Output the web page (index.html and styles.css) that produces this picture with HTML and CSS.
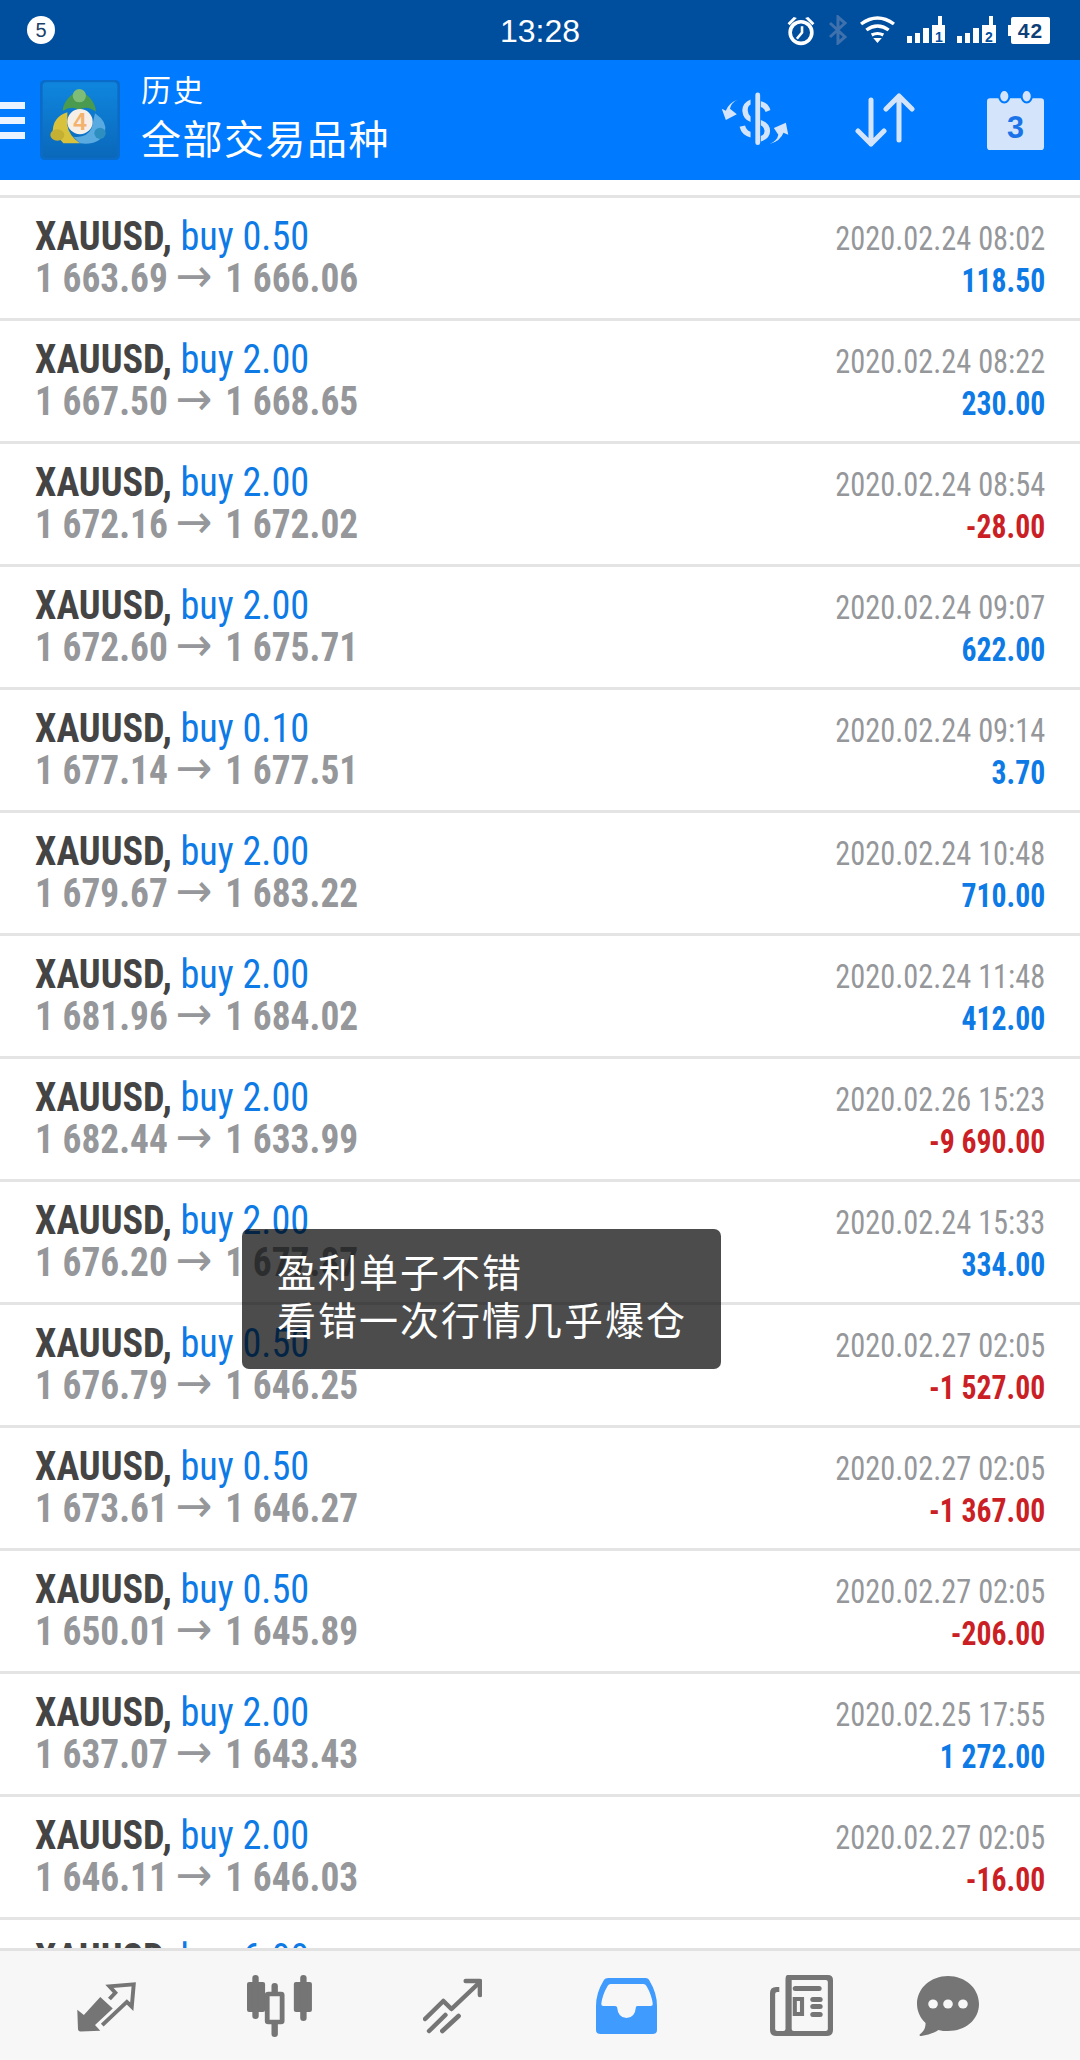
FILE: index.html
```html
<!DOCTYPE html>
<html lang="zh">
<head>
<meta charset="UTF-8">
<title>历史</title>
<link rel="stylesheet" href="styles.css">
</head>
<body>
<div class="screen">

  <div class="status">
    <div class="status-left"><span class="badge">5</span></div>
    <div class="clock">13:28</div>
    <div class="status-right">
      <svg width="30" height="31" viewBox="0 0 28 30"><circle cx="14" cy="17" r="10.5" fill="none" stroke="#fff" stroke-width="3.5"/><path d="M15 11v6l-5 6" fill="none" stroke="#fff" stroke-width="2.5"/><path d="M1 8l6-6 3 1-7 7zM27 8l-6-6-3 1 7 7z" fill="#fff"/></svg>
      <svg width="20" height="30" viewBox="0 0 20 30"><path d="M2 8l15 14-7 6V2l7 6L2 22" fill="none" stroke="#3f71ad" stroke-width="3"/></svg>
      <svg width="35" height="28" viewBox="0 0 33 28" preserveAspectRatio="none"><path d="M1 8q15.500-12 31 0M6 14q10.500-8 21 0M11 19q5.500-3 11 0" fill="none" stroke="#fff" stroke-width="3.2"/><path d="M12.500 22h8l-4 5z" fill="#fff"/></svg>
      <svg width="38" height="28" viewBox="0 0 38 28"><path d="M0 20h5v7H0zM8 17h5v10H8zM16 12h6v15h-6zM25 9h13v18H25zM31 0h4v9h-4z" fill="#fff"/><text x="28" y="26" class="sim">1</text></svg>
      <svg width="39" height="28" viewBox="0 0 39 28"><path d="M0 20h5v7H0zM8 17h5v10H8zM16 12h6v15h-6zM25 9h14v18H25zM32 0h4v9h-4z" fill="#fff"/><text x="28" y="26" class="sim">2</text></svg>
      <div class="battery">42</div>
    </div>
  </div>

  <div class="appbar">
    <div class="burger"><i></i><i></i><i></i></div>
    <svg class="logo" width="80" height="80" viewBox="30 15 240 240">
      <defs><linearGradient id="logobg" x1="0" y1="0" x2="0" y2="1"><stop offset="0" stop-color="#0f86de"/><stop offset="1" stop-color="#0a68ba"/></linearGradient></defs>
      <rect x="30" y="15" width="240" height="240" rx="14" fill="#0a6bc8"/>
      <rect x="38" y="22" width="224" height="226" rx="12" fill="url(#logobg)"/>
      <path d="M98 108Q100 70 148 45 195 70 198 110 170 90 148 105 125 90 98 108z" fill="#4a9a50"/>
      <circle cx="148" cy="62" r="20" fill="#7dbd78"/>
      <path d="M112 112Q70 125 68 168L100 205H150Q115 180 112 150z" fill="#d8c23c"/>
      <ellipse cx="82" cy="180" rx="21" ry="17" fill="#c4b033"/>
      <path d="M195 115Q232 140 225 170 210 212 150 205L130 185Q170 190 185 160z" fill="#58aae0"/>
      <circle cx="210" cy="175" r="17" fill="#2d8fc0"/>
      <circle cx="150" cy="140" r="38" fill="#f5efe8"/>
      <text x="150" y="165" class="logo-num">4</text>
    </svg>
    <div class="titles">
      <div class="title-small">历史</div>
      <div class="title-big">全部交易品种</div>
    </div>
    <div class="actions">
      <svg width="94" height="72" viewBox="0 0 270 210"><g fill="#d4e5fb"><rect x="136" y="25" width="14" height="153" rx="7"/><path d="M152 50q22 4 28 26l-14 6q-3-12-14-15zM122 45v15q-9 5-8 18 1 12 8 17v16q-22-8-24-32-1-24 24-34zM152 105q27 9 27 32 0 22-27 31v-16q11-5 11-15 0-10-11-17zM90 125l16-4q4 15 16 18v17q-26-6-32-31z"/><path d="M85 45Q65 55 62 72L82 88 50 105 38 72 50 78Q58 55 85 45zM178 175Q200 165 203 148L190 128 225 113 232 148 218 142Q210 165 178 175z"/></g></svg>
      <svg width="60" height="54" viewBox="0 0 60 54"><g fill="none" stroke="#d4e5fb" stroke-width="5" stroke-linecap="round" stroke-linejoin="round"><path d="M16 7v44M3 38l13 13 13-13"/><path d="M44 3v44M31 16L44 3l13 13"/></g></svg>
      <svg class="act-cal" width="57" height="60" viewBox="0 0 56 58" preserveAspectRatio="none"><path d="M3 8h50q3 0 3 3v44q0 3-3 3H3q-3 0-3-3V11q0-3 3-3z" fill="#d4e5fb"/><ellipse cx="17" cy="6" rx="5" ry="6" fill="#d4e5fb" stroke="#007aff" stroke-width="2"/><ellipse cx="39" cy="6" rx="5" ry="6" fill="#d4e5fb" stroke="#007aff" stroke-width="2"/><text x="28" y="46" class="cal-num">3</text></svg>
    </div>
  </div>

  <div class="list">
    <div class="row">
      <div class="left"><div class="head"><b>XAUUSD,</b> <span class="buy">buy 0.50</span></div><div class="prices">1 663.69<span class="arr">→</span>1 666.06</div></div>
      <div class="right"><div class="date">2020.02.24 08:02</div><div class="pl">118.50</div></div>
    </div>
    <div class="row">
      <div class="left"><div class="head"><b>XAUUSD,</b> <span class="buy">buy 2.00</span></div><div class="prices">1 667.50<span class="arr">→</span>1 668.65</div></div>
      <div class="right"><div class="date">2020.02.24 08:22</div><div class="pl">230.00</div></div>
    </div>
    <div class="row">
      <div class="left"><div class="head"><b>XAUUSD,</b> <span class="buy">buy 2.00</span></div><div class="prices">1 672.16<span class="arr">→</span>1 672.02</div></div>
      <div class="right"><div class="date">2020.02.24 08:54</div><div class="pl loss">-28.00</div></div>
    </div>
    <div class="row">
      <div class="left"><div class="head"><b>XAUUSD,</b> <span class="buy">buy 2.00</span></div><div class="prices">1 672.60<span class="arr">→</span>1 675.71</div></div>
      <div class="right"><div class="date">2020.02.24 09:07</div><div class="pl">622.00</div></div>
    </div>
    <div class="row">
      <div class="left"><div class="head"><b>XAUUSD,</b> <span class="buy">buy 0.10</span></div><div class="prices">1 677.14<span class="arr">→</span>1 677.51</div></div>
      <div class="right"><div class="date">2020.02.24 09:14</div><div class="pl">3.70</div></div>
    </div>
    <div class="row">
      <div class="left"><div class="head"><b>XAUUSD,</b> <span class="buy">buy 2.00</span></div><div class="prices">1 679.67<span class="arr">→</span>1 683.22</div></div>
      <div class="right"><div class="date">2020.02.24 10:48</div><div class="pl">710.00</div></div>
    </div>
    <div class="row">
      <div class="left"><div class="head"><b>XAUUSD,</b> <span class="buy">buy 2.00</span></div><div class="prices">1 681.96<span class="arr">→</span>1 684.02</div></div>
      <div class="right"><div class="date">2020.02.24 11:48</div><div class="pl">412.00</div></div>
    </div>
    <div class="row">
      <div class="left"><div class="head"><b>XAUUSD,</b> <span class="buy">buy 2.00</span></div><div class="prices">1 682.44<span class="arr">→</span>1 633.99</div></div>
      <div class="right"><div class="date">2020.02.26 15:23</div><div class="pl loss">-9 690.00</div></div>
    </div>
    <div class="row">
      <div class="left"><div class="head"><b>XAUUSD,</b> <span class="buy">buy 2.00</span></div><div class="prices">1 676.20<span class="arr">→</span>1 677.87</div></div>
      <div class="right"><div class="date">2020.02.24 15:33</div><div class="pl">334.00</div></div>
    </div>
    <div class="row">
      <div class="left"><div class="head"><b>XAUUSD,</b> <span class="buy">buy 0.50</span></div><div class="prices">1 676.79<span class="arr">→</span>1 646.25</div></div>
      <div class="right"><div class="date">2020.02.27 02:05</div><div class="pl loss">-1 527.00</div></div>
    </div>
    <div class="row">
      <div class="left"><div class="head"><b>XAUUSD,</b> <span class="buy">buy 0.50</span></div><div class="prices">1 673.61<span class="arr">→</span>1 646.27</div></div>
      <div class="right"><div class="date">2020.02.27 02:05</div><div class="pl loss">-1 367.00</div></div>
    </div>
    <div class="row">
      <div class="left"><div class="head"><b>XAUUSD,</b> <span class="buy">buy 0.50</span></div><div class="prices">1 650.01<span class="arr">→</span>1 645.89</div></div>
      <div class="right"><div class="date">2020.02.27 02:05</div><div class="pl loss">-206.00</div></div>
    </div>
    <div class="row">
      <div class="left"><div class="head"><b>XAUUSD,</b> <span class="buy">buy 2.00</span></div><div class="prices">1 637.07<span class="arr">→</span>1 643.43</div></div>
      <div class="right"><div class="date">2020.02.25 17:55</div><div class="pl">1 272.00</div></div>
    </div>
    <div class="row">
      <div class="left"><div class="head"><b>XAUUSD,</b> <span class="buy">buy 2.00</span></div><div class="prices">1 646.11<span class="arr">→</span>1 646.03</div></div>
      <div class="right"><div class="date">2020.02.27 02:05</div><div class="pl loss">-16.00</div></div>
    </div>
    <div class="row">
      <div class="left"><div class="head"><b>XAUUSD,</b> <span class="buy">buy 6.00</span></div></div>
    </div>
  </div>

  <div class="toast">盈利单子不错<br>看错一次行情几乎爆仓</div>

  <div class="nav">
    <svg width="63" height="54" viewBox="45 25 192 170" preserveAspectRatio="none"><path d="M52 122L72 138 122 82 160 118 106 170 122 188 62 190Q54 190 54 182z" fill="#757575"/><path d="M150 88L168 68 150 48 224 42 218 112 203 97 128 170" fill="none" stroke="#757575" stroke-width="12"/></svg>
    <svg class="nav-candle" width="66" height="62" viewBox="0 0 62 62" preserveAspectRatio="none"><g fill="#757575"><rect x="0" y="7" width="17" height="30" rx="2"/><rect x="5" y="0" width="6" height="44" rx="3"/><rect x="44" y="7" width="17" height="30" rx="2"/><rect x="50" y="0" width="6" height="46" rx="3"/><rect x="23" y="8" width="6" height="54" rx="3"/></g><rect x="19" y="19" width="14" height="28" rx="1" fill="#f7f7f7" stroke="#757575" stroke-width="4.500"/></svg>
    <svg class="nav-chart" width="59" height="56" viewBox="0 0 58 56" preserveAspectRatio="none"><g fill="none" stroke="#757575" stroke-width="4.500" stroke-linecap="round" stroke-linejoin="round"><path d="M2 41l18-18 8 8 28-27"/><path d="M42 3h14v14"/><path d="M6 53l16-16M19 53l16-15"/></g></svg>
    <svg class="nav-inbox" width="61" height="56" viewBox="0 0 58 56" preserveAspectRatio="none"><path fill-rule="evenodd" d="M12 0h35q3 0 4 3 7 12 7 25v24q0 4-4 4H4q-4 0-4-4V28Q0 15 7 3q1-3 5-3zM14 6q-2 0-3 2-5 9-6 18 0 2 2 2h11q1 0 2 1 1 11 9 11t9-11q0-1 2-1h12q2 0 2-2-1-9-6-18-1-2-3-2z" fill="#409bff"/></svg>
    <svg class="nav-news" width="63" height="61" viewBox="0 0 61 61" preserveAspectRatio="none"><g fill="#757575"><path fill-rule="evenodd" d="M17 0h39q5 0 5 5v50q0 6-6 6H6q-6 0-6-6V18q0-6 6-6h3v5H7q-2 0-2 2v35q0 2 2 2h6q2 0 2-2V5q0-5 2-5zM21 5v49q0 2 2 2h31q2 0 2-2V7q0-2-2-2z"/><rect x="22" y="11" width="28" height="5" rx="2.500"/><path fill-rule="evenodd" d="M22 22h11v19H22zM26 26v11h3V26z"/><rect x="39" y="22" width="12" height="5" rx="2.500"/><rect x="39" y="29" width="12" height="5" rx="2.500"/><rect x="39" y="37" width="12" height="5" rx="2.500"/></g></svg>
    <svg class="nav-chat" width="62" height="60" viewBox="0 0 58 60" preserveAspectRatio="none"><path d="M29 0c16 0 29 12 29 28S45 55 29 55c-3 0-6 0-9-1-4 3-10 5-16 6-2 0-2-1-1-2 4-3 5-7 5-11C3 42 0 35 0 28 0 12 13 0 29 0z" fill="#757575"/><circle cx="15" cy="28" r="4.500" fill="#f7f7f7"/><circle cx="29" cy="28" r="4.500" fill="#f7f7f7"/><circle cx="43" cy="28" r="4.500" fill="#f7f7f7"/></svg>
  </div>

</div>
</body>
</html>
```

FILE: styles.css
```css
* {
  box-sizing: border-box;
}

body {
  margin: 0;
  font-family: Roboto, "Liberation Sans", sans-serif;
  background: #fff;
}

.screen {
  position: relative;
  width: 1080px;
  height: 2060px;
  display: flex;
  flex-direction: column;
  overflow: hidden;
}

/* status bar */
.status {
  height: 60px;
  flex: none;
  background: #004e9e;
  color: #fff;
  display: flex;
  align-items: center;
  justify-content: space-between;
  position: relative;
  padding: 0 30px 0 27px;
}

.badge {
  display: block;
  width: 28px;
  height: 28px;
  border-radius: 50%;
  background: #fff;
  color: #1c3f6b;
  font: 20px/28px "Liberation Sans", sans-serif;
  text-align: center;
}

.clock {
  position: absolute;
  left: 500px;
  top: 12px;
  font: 32px/38px "Liberation Sans", sans-serif;
}

.status-right {
  display: flex;
  align-items: center;
  gap: 12px;
}

.sim {
  font: bold 14px "Liberation Sans", sans-serif;
  fill: #004e9e;
}

.battery {
  position: relative;
  width: 39px;
  height: 27px;
  margin-left: 3px;
  background: #fff;
  border-radius: 2px;
  color: #0e3f78;
  font: bold 21px/27px "Liberation Sans", sans-serif;
  text-align: center;
  letter-spacing: 1px;
}

.battery::before {
  content: "";
  position: absolute;
  left: -3px;
  top: 8px;
  width: 3px;
  height: 11px;
  background: #fff;
}

/* app bar */
.appbar {
  height: 120px;
  flex: none;
  background: #007aff;
  display: flex;
  align-items: center;
  color: #fff;
}

.burger {
  width: 25px;
  display: flex;
  flex-direction: column;
  gap: 8px;
}

.burger i {
  display: block;
  height: 7px;
  background: #eaf3ff;
}

.logo {
  margin-left: 15px;
}

.logo-num {
  font: bold 72px "Liberation Sans", sans-serif;
  fill: #f3b26e;
  text-anchor: middle;
}

.titles {
  margin-left: 21px;
  margin-top: -2px;
  font-family: "Noto Sans CJK SC", sans-serif;
}

.title-small {
  font-size: 30px;
  line-height: 28px;
  margin-bottom: 8px;
  letter-spacing: 2px;
}

.title-big {
  font-size: 40px;
  line-height: 54px;
  letter-spacing: 1.5px;
}

.actions {
  margin-left: auto;
  margin-right: 36px;
  display: flex;
  align-items: center;
  gap: 67px;
}

.actions svg:first-child {
  margin-right: -14px;
}

.act-cal {
  margin-left: 5px;
}

.cal-num {
  font: bold 30px "Liberation Sans", sans-serif;
  fill: #1a73e8;
  text-anchor: middle;
}

/* history list */
.list {
  flex: 1;
  min-height: 0;
  overflow: hidden;
  padding-top: 15px;
}

.row {
  height: 123px;
  padding: 17px 35px 0 35px;
  border-top: 3px solid #e4e4e4;
  display: flex;
  justify-content: space-between;
  font-stretch: 75%;
}

.head,
.prices {
  font-size: 40px;
  white-space: nowrap;
  transform-origin: left;
}

.head {
  line-height: 44px;
  transform: scaleX(0.955);
}

.head b {
  color: #444;
}

.buy {
  color: #0d7ae6;
}

.prices {
  line-height: 40px;
  color: #95979a;
  font-weight: bold;
  transform: scaleX(0.935);
}

.arr {
  margin: 0 14px 0 8px;
  font: 47px/0 "DejaVu Sans", sans-serif;
}

.right {
  text-align: right;
}

.date,
.pl {
  font-size: 33px;
  white-space: nowrap;
  transform-origin: right;
}

.date {
  margin-top: 3px;
  line-height: 41px;
  color: #95979a;
  transform: scaleX(0.92);
}

.pl {
  line-height: 44px;
  color: #0d7ae6;
  font-weight: bold;
  transform: scaleX(0.9);
}

.pl.loss {
  color: #cb1f26;
}

/* toast */
.toast {
  position: absolute;
  left: 242px;
  top: 1229px;
  width: 479px;
  height: 140px;
  padding: 17px 0 0 35px;
  background: rgba(0, 0, 0, 0.7);
  border-radius: 7px;
  color: #fff;
  font: 39px/48px "Noto Sans CJK SC", sans-serif;
  letter-spacing: 2px;
}

/* bottom nav */
.nav {
  height: 112px;
  flex: none;
  background: #f7f7f7;
  border-top: 3px solid #e2e2e2;
  display: flex;
  align-items: center;
  padding-left: 75px;
}

.nav-candle {
  margin-left: 109px;
}

.nav-chart {
  margin-left: 110px;
}

.nav-inbox {
  margin-left: 114px;
}

.nav-news {
  margin-left: 113px;
}

.nav-chat {
  margin-left: 84px;
}
```
